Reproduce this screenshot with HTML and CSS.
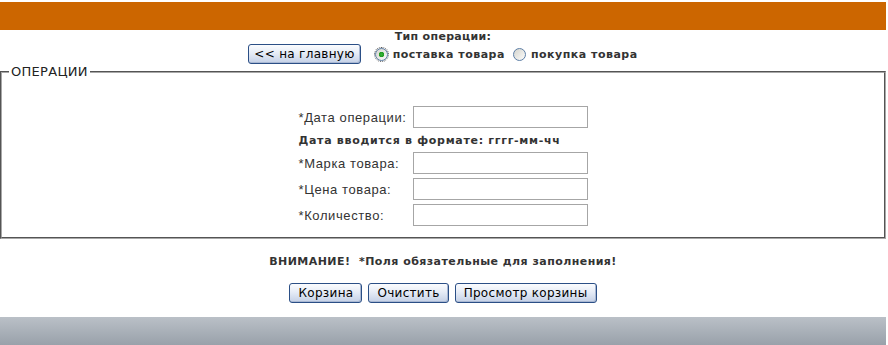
FILE: index.html
```html
<!doctype html>
<html lang="ru">
<head>
    <meta charset="UTF-8">
    <title>Операции</title>
    <link rel="stylesheet" href="styles.css">
</head>
<body>
<div class="page">
    <div class="topbar"></div>

    <form class="order" action="#">
        <div class="optype">
            <div class="optype-title">Тип операции:</div>
            <div class="optype-row">
                <button type="button" class="btn btn-home">&lt;&lt; на главную</button>
                <label class="radio"><input type="radio" name="op" checked> поставка товара</label>
                <label class="radio"><input type="radio" name="op"> покупка товара</label>
            </div>
        </div>

        <fieldset class="ops">
            <legend>ОПЕРАЦИИ</legend>
            <table class="ops-table">
                <tr>
                    <td class="ops-label">*Дата операции:</td>
                    <td><input type="text" class="field" name="date"></td>
                </tr>
                <tr>
                    <td colspan="2" class="ops-hint">Дата вводится в формате: гггг-мм-чч</td>
                </tr>
                <tr>
                    <td class="ops-label">*Марка товара:</td>
                    <td><input type="text" class="field" name="brand"></td>
                </tr>
                <tr>
                    <td class="ops-label">*Цена товара:</td>
                    <td><input type="text" class="field" name="price"></td>
                </tr>
                <tr>
                    <td class="ops-label">*Количество:</td>
                    <td><input type="text" class="field" name="count"></td>
                </tr>
            </table>
        </fieldset>

        <p class="notice">ВНИМАНИЕ!&nbsp; *Поля обязательные для заполнения!</p>

        <div class="actions">
            <button type="button" class="btn">Корзина</button>
            <button type="reset" class="btn">Очистить</button>
            <button type="button" class="btn">Просмотр корзины</button>
        </div>
    </form>

    <div class="footer"></div>
</div>
</body>
</html>
```

FILE: styles.css
```css
* {
    margin: 0;
    padding: 0;
    box-sizing: border-box;
}

body {
    background-color: #fff;
    font-family: "DejaVu Sans", Verdana, sans-serif;
    font-size: 11px;
    color: #333;
}

.page {
    width: 886px;
}

.topbar {
    height: 28px;
    margin-top: 2px;
    background-color: #cc6600;
}

.optype {
    text-align: center;
}

.optype-title {
    font-weight: bold;
    line-height: 14px;
    letter-spacing: 0.3px;
}

.optype-row {
    display: flex;
    justify-content: center;
    align-items: center;
    height: 20px;
    font-weight: bold;
    letter-spacing: 0.5px;
}

.optype-row .btn {
    margin-right: 14px;
}

.radio {
    display: flex;
    align-items: center;
    margin-right: 8px;
}

.radio:last-child {
    margin-right: 0;
}

.radio input {
    appearance: none;
    -webkit-appearance: none;
    width: 13px;
    height: 13px;
    margin-right: 5px;
    border: 1px solid #5d7ea5;
    border-radius: 50%;
    background: linear-gradient(135deg, #d4d4cd, #fcfcfb);
}

.radio input:checked {
    background: radial-gradient(circle, #3bb53b 0, #1f9a1f 2.5px, transparent 3px),
    linear-gradient(135deg, #d4d4cd, #fcfcfb);
    outline: 1px dotted #555;
    outline-offset: 0;
}

.btn {
    height: 20px;
    padding: 0 8px;
    font-family: "DejaVu Sans", Tahoma, sans-serif;
    font-size: 12px;
    font-weight: normal;
    letter-spacing: 0.3px;
    color: #000;
    border: 1px solid #2b4f86;
    border-radius: 3px;
    background: linear-gradient(#fbfcfe, #e6ecf6 45%, #c4d0e6);
    box-shadow: inset -1px -1px 0 #a9b8d3;
}

.btn-home {
    padding: 0 5px;
}

.ops {
    padding: 24px 7px 9px;
    border: 2px groove #a8a8a8;
}

.ops legend {
    padding: 0 2px;
    font-size: 13px;
    line-height: 16px;
    letter-spacing: 0.3px;
    color: #222;
}

.ops-table {
    margin: 0 auto;
    border-collapse: collapse;
    font-family: "Liberation Sans", Arial, sans-serif;
    font-size: 13px;
    letter-spacing: 0.6px;
}

.ops-table td {
    padding: 0;
    height: 26px;
}

.ops-label {
    width: 114px;
}

.ops-table .ops-hint {
    height: 20px;
    font-family: "DejaVu Sans", Verdana, sans-serif;
    font-size: 11px;
    font-weight: bold;
    letter-spacing: 0.7px;
}

.field {
    display: block;
    width: 175px;
    height: 22px;
    border: 1px solid #a6a6a6;
    background-color: #fff;
}

.notice {
    margin-top: 16px;
    line-height: 14px;
    text-align: center;
    font-weight: bold;
    letter-spacing: 0.45px;
}

.actions {
    display: flex;
    justify-content: center;
    gap: 6px;
    margin-top: 14px;
}

.footer {
    height: 28px;
    margin-top: 14px;
    background: linear-gradient(#bac0c7, #99a1aa);
}
```
